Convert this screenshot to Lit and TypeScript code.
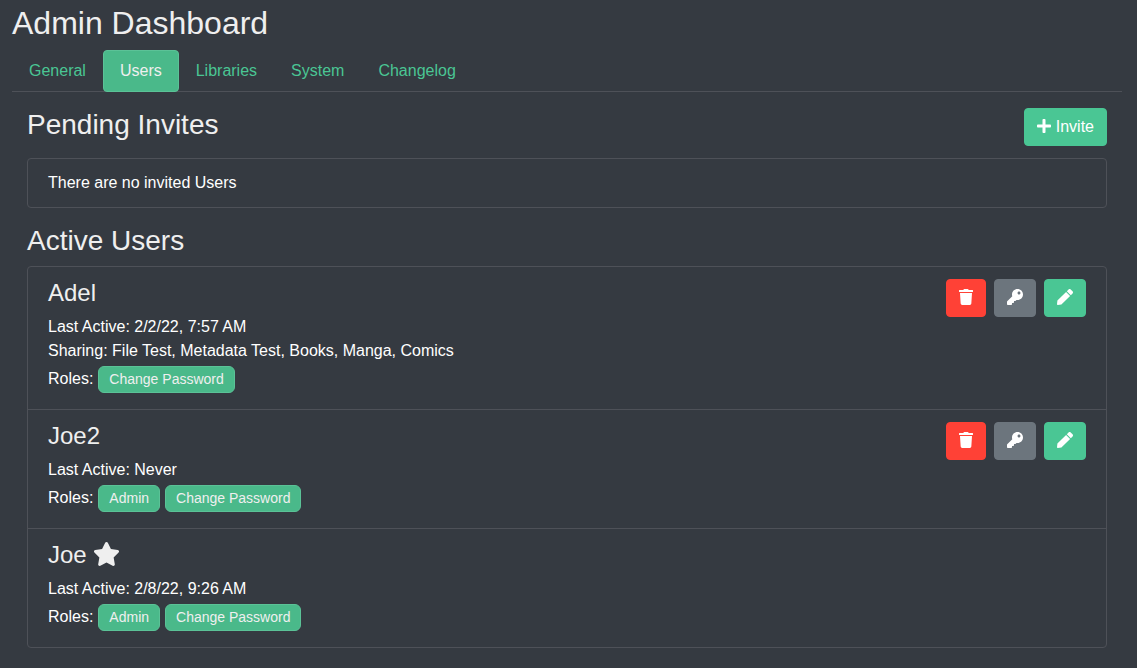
import { LitElement, html, css, svg, nothing } from "lit";
import { customElement, property, state } from "lit/decorators.js";

interface Icon {
  width: number;
  path: string;
}

const ICONS: Record<string, Icon> = {
  plus: {
    width: 448,
    path: "M416 208H272V64c0-17.67-14.33-32-32-32h-32c-17.67 0-32 14.33-32 32v144H32c-17.67 0-32 14.33-32 32v32c0 17.67 14.33 32 32 32h144v144c0 17.67 14.33 32 32 32h32c17.67 0 32-14.33 32-32V304h144c17.67 0 32-14.33 32-32v-32c0-17.67-14.33-32-32-32z",
  },
  trash: {
    width: 448,
    path: "M432 32H312l-9.4-18.7A24 24 0 0 0 281.1 0H166.8a23.72 23.72 0 0 0-21.4 13.3L136 32H16A16 16 0 0 0 0 48v32a16 16 0 0 0 16 16h416a16 16 0 0 0 16-16V48a16 16 0 0 0-16-16zM53.2 467a48 48 0 0 0 47.9 45h245.8a48 48 0 0 0 47.9-45L416 128H32z",
  },
  key: {
    width: 512,
    path: "M512 176.001C512 273.203 433.202 352 336 352c-11.22 0-22.19-1.062-32.827-3.069l-24.012 27.014A23.999 23.999 0 0 1 261.223 384H224v40c0 13.255-10.745 24-24 24h-40v40c0 13.255-10.745 24-24 24H24c-13.255 0-24-10.745-24-24v-78.059c0-6.365 2.529-12.47 7.029-16.971l161.802-161.802C163.108 213.814 160 195.271 160 176 160 78.798 238.797.001 335.999 0 433.488-.001 512 78.511 512 176.001zM336 128c0 26.51 21.49 48 48 48s48-21.49 48-48-21.49-48-48-48-48 21.49-48 48z",
  },
  pen: {
    width: 512,
    path: "M290.74 93.24l128.02 128.02-277.99 277.99-114.14 12.6C11.35 513.54-1.56 500.62.14 485.34l12.7-114.22 277.9-277.88zm207.2-19.06l-60.11-60.11c-18.75-18.75-49.16-18.75-67.91 0l-56.55 56.55 128.02 128.02 56.55-56.55c18.75-18.76 18.75-49.16 0-67.91z",
  },
  star: {
    width: 576,
    path: "M259.3 17.8L194 150.2 47.9 171.5c-26.2 3.8-36.7 36.1-17.7 54.6l105.7 103-25 145.5c-4.5 26.3 23.2 46 46.4 33.7L288 439.6l130.7 68.7c23.2 12.2 50.9-7.4 46.4-33.7l-25-145.5 105.7-103c19-18.5 8.5-50.8-17.7-54.6L382 150.2 316.7 17.8c-11.7-23.6-45.6-23.9-57.4 0z",
  },
};

const icon = (name: string) => html`<svg
  class="icon"
  viewBox="0 0 ${ICONS[name].width} 512"
  aria-hidden="true"
>
  ${svg`<path fill="currentColor" d=${ICONS[name].path}></path>`}
</svg>`;

interface User {
  name: string;
  lastActive: string;
  sharing?: string;
  roles: string[];
  self?: boolean;
}

const controls = css`
  .icon {
    display: block;
    height: 1em;
    width: auto;
    margin-bottom: 2px;
  }
  .btn {
    display: inline-flex;
    align-items: center;
    gap: 5px;
    height: 38px;
    padding: 0 12px;
    border: 1px solid transparent;
    border-radius: 4px;
    font: inherit;
    color: #fff;
    cursor: pointer;
  }
  .primary {
    background: #4ac694;
    border-color: #4ac694;
  }
  .danger {
    background: #ff4136;
    border-color: #ff4136;
  }
  .secondary {
    background: #6c757d;
    border-color: #6c757d;
  }
`;

@customElement("user-row")
export class UserRow extends LitElement {
  @property({ attribute: false }) user!: User;

  static styles = [
    controls,
    css`
      :host {
        display: flex;
        justify-content: space-between;
        align-items: flex-start;
        gap: 16px;
        padding: 12px 20px;
      }
      .name {
        display: flex;
        align-items: center;
        gap: 6px;
        margin: 0 0 8px;
        font-size: 24px;
        line-height: 28px;
        font-weight: 400;
        color: #efefef;
      }
      .roles {
        display: flex;
        align-items: baseline;
        flex-wrap: wrap;
        gap: 5px;
        padding: 3px 0 4px;
      }
      .badge {
        padding: 0 10px;
        border: 1px solid #5bc297;
        border-radius: 6px;
        background: #4ab98a;
        font-size: 14px;
        line-height: 25px;
        color: #efefef;
      }
      .actions {
        display: flex;
        gap: 8px;
      }
    `,
  ];

  render() {
    const u = this.user;
    return html`
      <div>
        <h4 class="name">${u.name}${u.self ? icon("star") : nothing}</h4>
        <div>Last Active: ${u.lastActive}</div>
        ${u.sharing ? html`<div>Sharing: ${u.sharing}</div>` : nothing}
        <div class="roles">
          <span>Roles:</span>
          ${u.roles.map((r) => html`<span class="badge">${r}</span>`)}
        </div>
      </div>
      ${u.self
        ? nothing
        : html`<div class="actions">
            <button class="btn danger" aria-label="Delete ${u.name}">${icon("trash")}</button>
            <button class="btn secondary" aria-label="Change password of ${u.name}">${icon("key")}</button>
            <button class="btn primary" aria-label="Edit ${u.name}">${icon("pen")}</button>
          </div>`}
    `;
  }
}

@customElement("app-root")
export class AppRoot extends LitElement {
  @state() private active = "Users";

  private tabs = ["General", "Users", "Libraries", "System", "Changelog"];

  private users: User[] = [
    {
      name: "Adel",
      lastActive: "2/2/22, 7:57 AM",
      sharing: "File Test, Metadata Test, Books, Manga, Comics",
      roles: ["Change Password"],
    },
    { name: "Joe2", lastActive: "Never", roles: ["Admin", "Change Password"] },
    { name: "Joe", lastActive: "2/8/22, 9:26 AM", roles: ["Admin", "Change Password"], self: true },
  ];

  static styles = [
    controls,
    css`
      :host {
        display: block;
        box-sizing: border-box;
        min-height: 100vh;
        padding: 4px 15px 20px 12px;
        background: #353a41;
        color: #fff;
        font-family: "Liberation Sans", Arial, sans-serif;
        font-size: 16px;
        line-height: 24px;
      }
      .title {
        margin: 0 0 8px;
        font-size: 32px;
        line-height: 38px;
        font-weight: 400;
        color: #efefef;
      }
      .tabs {
        display: flex;
        border-bottom: 1px solid #4e5158;
      }
      .tab {
        box-sizing: border-box;
        height: 42px;
        margin-bottom: -1px;
        padding: 8px 16px;
        border: 1px solid transparent;
        border-radius: 4px;
        color: #4ac694;
        text-decoration: none;
      }
      .tab.active {
        background: #4ab98a;
        border-color: #5bc297;
        color: #efefef;
      }
      .content {
        padding: 16px 15px 0;
      }
      .head {
        display: flex;
        justify-content: space-between;
        align-items: flex-start;
        margin-bottom: 12px;
      }
      .section {
        margin: 0;
        font-size: 28px;
        line-height: 34px;
        font-weight: 400;
        color: #efefef;
      }
      .spaced {
        margin: 16px 0 8px;
      }
      .list {
        margin: 0;
        padding: 0;
        list-style: none;
        border: 1px solid #4e5158;
        border-radius: 4px;
      }
      .list > li + li {
        border-top: 1px solid #4e5158;
      }
      .empty {
        padding: 12px 20px;
      }
    `,
  ];

  private select(e: Event, tab: string) {
    e.preventDefault();
    this.active = tab;
  }

  render() {
    return html`
      <h2 class="title">Admin Dashboard</h2>
      <nav class="tabs">
        ${this.tabs.map(
          (t) => html`<a
            class="tab ${t === this.active ? "active" : ""}"
            href="#${t.toLowerCase()}"
            @click=${(e: Event) => this.select(e, t)}
            >${t}</a
          >`,
        )}
      </nav>
      <main class="content">
        <div class="head">
          <h3 class="section">Pending Invites</h3>
          <button class="btn primary">${icon("plus")}<span>Invite</span></button>
        </div>
        <ul class="list">
          <li class="empty">There are no invited Users</li>
        </ul>
        <h3 class="section spaced">Active Users</h3>
        <ul class="list">
          ${this.users.map((u) => html`<li><user-row .user=${u}></user-row></li>`)}
        </ul>
      </main>
    `;
  }
}
